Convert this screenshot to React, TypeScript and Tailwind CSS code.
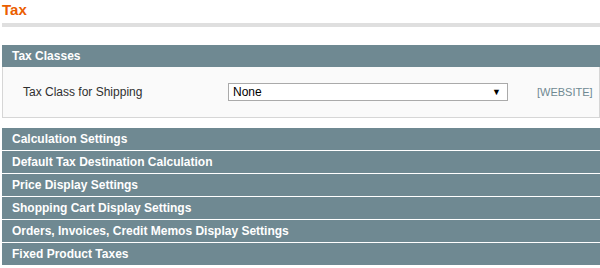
const sections = [
  "Calculation Settings",
  "Default Tax Destination Calculation",
  "Price Display Settings",
  "Shopping Cart Display Settings",
  "Orders, Invoices, Credit Memos Display Settings",
  "Fixed Product Taxes",
];

function SectionHead({ title }: { title: string }) {
  return (
    <div className="h-[22px] mb-[1px] bg-[#6f8992] px-[10px] flex items-center">
      <h4 className="text-white font-bold text-[12px]">{title}</h4>
    </div>
  );
}

export default function App() {
  return (
    <div className="pl-[2px] bg-white min-h-[268px] overflow-hidden font-['Liberation_Sans',Arial,sans-serif] text-[12px] text-[#2f2f2f]">
      <div className="h-[27px] border-b-4 border-[#dfdfdf]">
        <h3 className="text-[#eb5e00] font-bold text-[15px] leading-[20px]">Tax</h3>
      </div>

      <div className="mt-[18px]">
        <div className="h-[22px] bg-[#6f8992] px-[10px] flex items-center">
          <h4 className="text-white font-bold text-[12px]">Tax Classes</h4>
        </div>
        <div className="h-[51px] border border-t-0 border-[#d6d6d6] bg-[#fafafa] pl-[20px] flex items-center">
          <label className="w-[205px] text-[12px] text-[#2f2f2f]">Tax Class for Shipping</label>
          <div className="w-[280px] h-[18px] border border-[#aaaaaa] bg-white flex items-center justify-between pl-[4px] pr-[6px]">
            <span className="text-[12px] text-black">None</span>
            <span className="text-[9px] text-black leading-none">▼</span>
          </div>
          <span className="ml-[29px] text-[11px] text-[#6f8992]">[WEBSITE]</span>
        </div>
      </div>

      <div className="mt-[10px]">
        {sections.map((s) => (
          <SectionHead key={s} title={s} />
        ))}
      </div>
    </div>
  );
}
